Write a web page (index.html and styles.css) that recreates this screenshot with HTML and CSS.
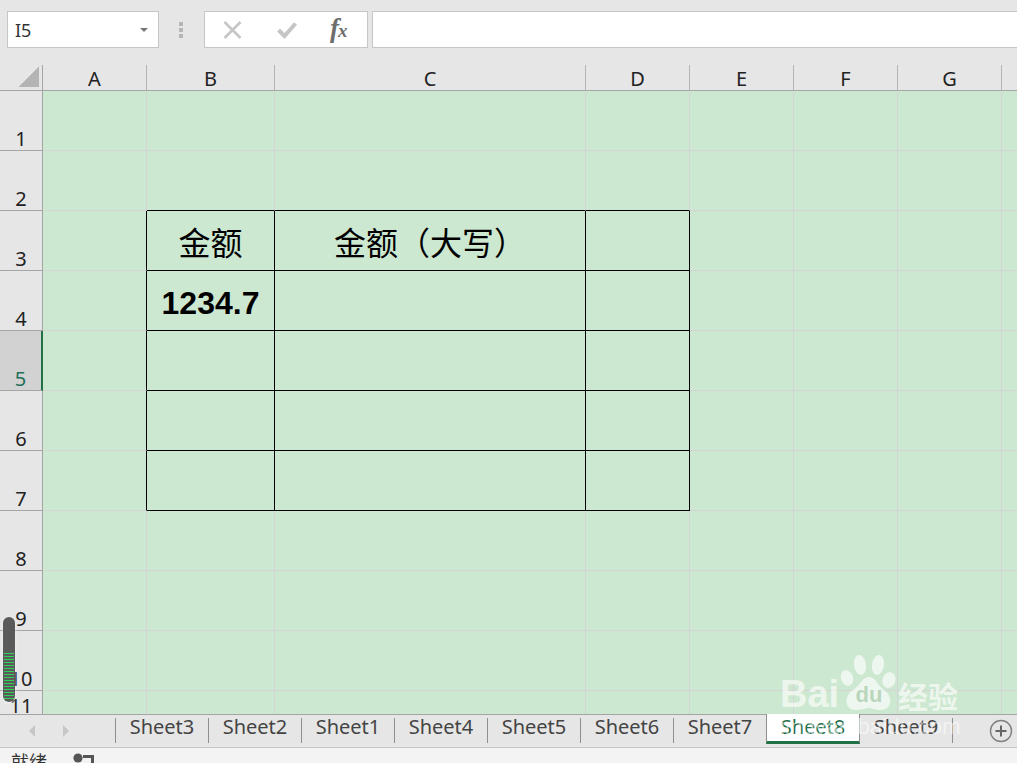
FILE: index.html
```html
<!DOCTYPE html>
<html lang="zh">
<head>
<meta charset="utf-8">
<title>Sheet8</title>
<link rel="stylesheet" href="styles.css">
</head>
<body>
<div class="app">
  <div class="formula-bar">
    <div class="name-box"><span>I5</span><i class="caret"></i></div>
    <div class="grip"><i></i><i></i><i></i></div>
    <div class="fx-box">
      <svg class="icon-x" width="19" height="18" viewBox="0 0 19 18"><path d="M1.5 1 L17.5 17 M17.5 1 L1.5 17" fill="none" stroke="#c6c6c6" stroke-width="2.6"/></svg>
      <svg class="icon-check" width="20" height="18" viewBox="0 0 20 18"><polyline points="1.5,9 7.5,15 18.5,2.5" fill="none" stroke="#c6c6c6" stroke-width="4"/></svg>
      <span class="fx-text">f<span class="fx-sub">x</span></span>
    </div>
    <div class="formula-input"></div>
  </div>
  <div class="sheet">
    <div class="corner"><i></i></div><div class="ch">A</div><div class="ch">B</div><div class="ch">C</div><div class="ch">D</div><div class="ch">E</div><div class="ch">F</div><div class="ch">G</div><div class="ch end"></div>

    <div class="rh">1</div><div class="c"></div><div class="c"></div><div class="c"></div><div class="c"></div><div class="c"></div><div class="c"></div><div class="c"></div><div class="c"></div>
    <div class="rh">2</div><div class="c"></div><div class="c bb"></div><div class="c bb"></div><div class="c bb"></div><div class="c"></div><div class="c"></div><div class="c"></div><div class="c"></div>
    <div class="rh">3</div><div class="c br"></div><div class="c br bb t">金额</div><div class="c br bb t">金额（大写）</div><div class="c br bb"></div><div class="c"></div><div class="c"></div><div class="c"></div><div class="c"></div>
    <div class="rh">4</div><div class="c br"></div><div class="c br bb n">1234.7</div><div class="c br bb"></div><div class="c br bb"></div><div class="c"></div><div class="c"></div><div class="c"></div><div class="c"></div>
    <div class="rh sel">5</div><div class="c br"></div><div class="c br bb"></div><div class="c br bb"></div><div class="c br bb"></div><div class="c"></div><div class="c"></div><div class="c"></div><div class="c"></div>
    <div class="rh">6</div><div class="c br"></div><div class="c br bb"></div><div class="c br bb"></div><div class="c br bb"></div><div class="c"></div><div class="c"></div><div class="c"></div><div class="c"></div>
    <div class="rh">7</div><div class="c br"></div><div class="c br bb"></div><div class="c br bb"></div><div class="c br bb"></div><div class="c"></div><div class="c"></div><div class="c"></div><div class="c"></div>
    <div class="rh">8</div><div class="c"></div><div class="c"></div><div class="c"></div><div class="c"></div><div class="c"></div><div class="c"></div><div class="c"></div><div class="c"></div>
    <div class="rh">9</div><div class="c"></div><div class="c"></div><div class="c"></div><div class="c"></div><div class="c"></div><div class="c"></div><div class="c"></div><div class="c"></div>
    <div class="rh">10</div><div class="c"></div><div class="c"></div><div class="c"></div><div class="c"></div><div class="c"></div><div class="c"></div><div class="c"></div><div class="c"></div>
    <div class="rh">11</div><div class="c"></div><div class="c"></div><div class="c"></div><div class="c"></div><div class="c"></div><div class="c"></div><div class="c"></div><div class="c"></div>
  </div>
  <div class="tabbar">
    <div class="tab-nav">
      <i class="arrow left"></i>
      <i class="arrow right"></i>
    </div>
    <div class="tab">Sheet3</div>
    <div class="tab">Sheet2</div>
    <div class="tab">Sheet1</div>
    <div class="tab">Sheet4</div>
    <div class="tab">Sheet5</div>
    <div class="tab">Sheet6</div>
    <div class="tab">Sheet7</div>
    <div class="tab active">Sheet8</div>
    <div class="tab">Sheet9</div>
    <div class="tab-end"></div>
    <svg class="add" width="24" height="24" viewBox="0 0 24 24"><circle cx="12" cy="12" r="10.5" fill="none" stroke="#808080" stroke-width="1.4"/><path d="M12 6.5V17.5M6.5 12H17.5" stroke="#666" stroke-width="2"/></svg>
  </div>
  <div class="status">
    <span class="ready">就绪</span>
    <svg class="macro" width="22" height="14" viewBox="0 0 22 14"><circle cx="5" cy="5" r="4.6" fill="#555"/><path d="M10 2H21V14H18V5H10Z" fill="#555"/></svg>
  </div>
</div>

<div class="scroll-pill">
  <div class="pill-lines"><i></i><i></i><i></i><i></i><i></i><i></i><i></i><i></i><i></i><i></i><i></i><i></i><i></i><i></i><i></i><i></i></div>
</div>

<div class="watermark">
  <svg class="paw" width="60" height="60" viewBox="0 0 60 60">
    <ellipse class="wm-fill" cx="7" cy="24" rx="6" ry="8" transform="rotate(-20 7 24)"/>
    <ellipse class="wm-fill" cx="20" cy="11" rx="6" ry="10" transform="rotate(-8 20 11)"/>
    <ellipse class="wm-fill" cx="38" cy="11" rx="6" ry="10" transform="rotate(8 38 11)"/>
    <ellipse class="wm-fill" cx="49" cy="26" rx="6.5" ry="8" transform="rotate(20 49 26)"/>
    <path class="wm-fill" d="M29 23 C36 23 38 32 44 36 C53 42 53 56 40 56 C34 56 32 54 29 54 C26 54 22 56 16 56 C4 56 4 42 13 36 C20 32 22 23 29 23 Z"/>
    <text class="wm-du" x="29" y="48" text-anchor="middle">du</text>
  </svg>
  <span class="wm-bai">Bai</span>
  <span class="wm-jy">经验</span>
  <span class="wm-url">jingyan.baidu.com</span>
</div>
</body>
</html>
```

FILE: styles.css
```css
* { box-sizing: border-box; }
html, body { margin: 0; padding: 0; height: 100%; overflow: hidden; }
body { font-family: "Noto Sans", "Noto Sans CJK SC", sans-serif; color: #222; background: #e6e6e6; position: relative; }
.app { width: 1017px; height: 763px; display: flex; flex-direction: column; overflow: hidden; }

.formula-bar { height: 65px; flex: none; display: flex; align-items: flex-start; padding: 11px 0 0 7px; background: #e6e6e6; }
.name-box { width: 152px; height: 37px; background: #fff; border: 1px solid #c6c6c6; display: flex; align-items: center; justify-content: space-between; padding: 0 10px 0 7px; font-size: 18px; color: #333; }
.caret { width: 0; height: 0; border-left: 4px solid transparent; border-right: 4px solid transparent; border-top: 4px solid #777; }
.grip { width: 45px; height: 37px; padding-right: 2px; display: flex; flex-direction: column; align-items: center; justify-content: center; gap: 2px; }
.grip i { width: 4px; height: 4px; background: #b5b5b5; }
.fx-box { width: 164px; height: 37px; background: #fff; border: 1px solid #c6c6c6; display: flex; align-items: center; padding-left: 18px; }
.icon-check { margin-left: 35px; }
.fx-text { margin-left: 33px; font-family: "Liberation Serif", serif; font-style: italic; font-weight: bold; font-size: 27px; line-height: 30px; color: #6e6e6e; white-space: nowrap; }
.fx-sub { font-size: 19px; margin-left: -1px; }
.formula-input { flex: 1; height: 37px; margin: 0 -2px 0 4px; background: #fff; border: 1px solid #c6c6c6; }

.sheet { flex: none; height: 649px; display: grid; overflow: hidden;
  grid-template-columns: 43px 104px 128px 311px 104px 104px 104px 104px 16px;
  grid-template-rows: 26px repeat(10, 60px) 27px; background: #cde8d0; }
.corner { background: #e6e6e6; border-bottom: 1px solid #a5a5a5; border-right: 1px solid #a5a5a5; display: flex; align-items: flex-end; justify-content: flex-end; padding: 0 3px 3px 0; }
.corner i { width: 20px; height: 20px; background: linear-gradient(135deg, transparent 50%, #b4b4b4 50%); }
.ch { background: #e6e6e6; border-bottom: 1px solid #a5a5a5; border-right: 1px solid #b4b4b4; text-align: center; font-size: 20px; line-height: 27px; color: #222; }
.ch.end { border-right: 0; }
.rh { background: #e6e6e6; border-right: 1px solid #a5a5a5; border-bottom: 1px solid #a5a5a5; font-size: 20px; line-height: 22px; color: #222; display: flex; align-items: flex-end; justify-content: center; overflow: hidden; }
.rh.sel { background: #d2d2d2; color: #1f6f5a; border-right: 2px solid #217346; }
.c { border-right: 1px solid #d4d4d4; border-bottom: 1px solid #d4d4d4; display: flex; align-items: center; justify-content: center; color: #000; min-width: 0; }
.c.br { border-right-color: #000; }
.c.bb { border-bottom-color: #000; }
.t { font-size: 32px; padding-top: 1px; font-family: "Noto Sans CJK SC", sans-serif; font-weight: 400; }
.n { font-size: 32px; padding-top: 6px; font-family: "Liberation Sans", sans-serif; font-weight: bold; }

.tabbar { flex: none; height: 34px; display: flex; align-items: flex-start; background: #e6e6e6; border-top: 1px solid #a5a5a5; border-bottom: 1px solid #c6c6c6; position: relative; }
.tab-nav { width: 116px; height: 25px; margin-top: 3px; display: flex; align-items: center; padding-left: 29px; gap: 28px; flex: none; border-right: 1px solid #8f8f8f; }
.arrow { width: 0; height: 0; border-top: 6px solid transparent; border-bottom: 6px solid transparent; }
.arrow.left { border-right: 6px solid #c6c6c6; }
.arrow.right { border-left: 6px solid #c6c6c6; }
.tab { width: 93px; height: 25px; margin-top: 3px; flex: none; text-align: center; font-size: 20px; line-height: 18px; color: #444; border-right: 1px solid #8f8f8f; }
.tab.active { height: 30px; margin-top: -1px; margin-left: -1px; width: 94px; padding-top: 4px; background: #fff; color: #1f6f4a; border-left: 1px solid #8f8f8f; border-right: 1px solid #8f8f8f; border-bottom: 3px solid #217346; }
.tab-end { flex: 1; }
.add { margin: 4px 4px 0 0; flex: none; }

.status { flex: 1; background: #f3f3f3; display: flex; align-items: flex-start; padding-left: 11px; overflow: hidden; }
.ready { font-size: 18px; line-height: 28px; color: #333; }
.macro { margin-left: 26px; margin-top: 5px; flex: none; }

.scroll-pill { position: absolute; left: 3px; top: 617px; width: 12px; height: 85px; background: #5a5a5a; border-radius: 6px; padding: 36px 1px 0; box-shadow: 0 1px 3px rgba(255,255,255,.7); }
.pill-lines { display: flex; flex-direction: column; gap: 2px; }
.pill-lines i { display: block; height: 1px; background: #2fd35a; }

.watermark { position: absolute; left: 780px; top: 654px; width: 190px; height: 90px; color: rgba(255,255,255,.65); }
.paw { position: absolute; left: 60px; top: 0; }
.wm-fill { fill: rgba(255,255,255,.65); }
.wm-du { font: bold 22px "Liberation Sans", sans-serif; fill: #b9d6bd; }
.wm-bai { position: absolute; left: 0; top: 15px; font: bold 38px/50px "Liberation Sans", sans-serif; }
.wm-jy { position: absolute; left: 118px; top: 21px; font: bold 30px/40px "Noto Sans CJK SC", sans-serif; }
.wm-url { position: absolute; left: 0; top: 59px; font: 22px/28px "Liberation Sans", sans-serif; white-space: nowrap; letter-spacing: .2px; color: rgba(255,255,255,.55); }
```
